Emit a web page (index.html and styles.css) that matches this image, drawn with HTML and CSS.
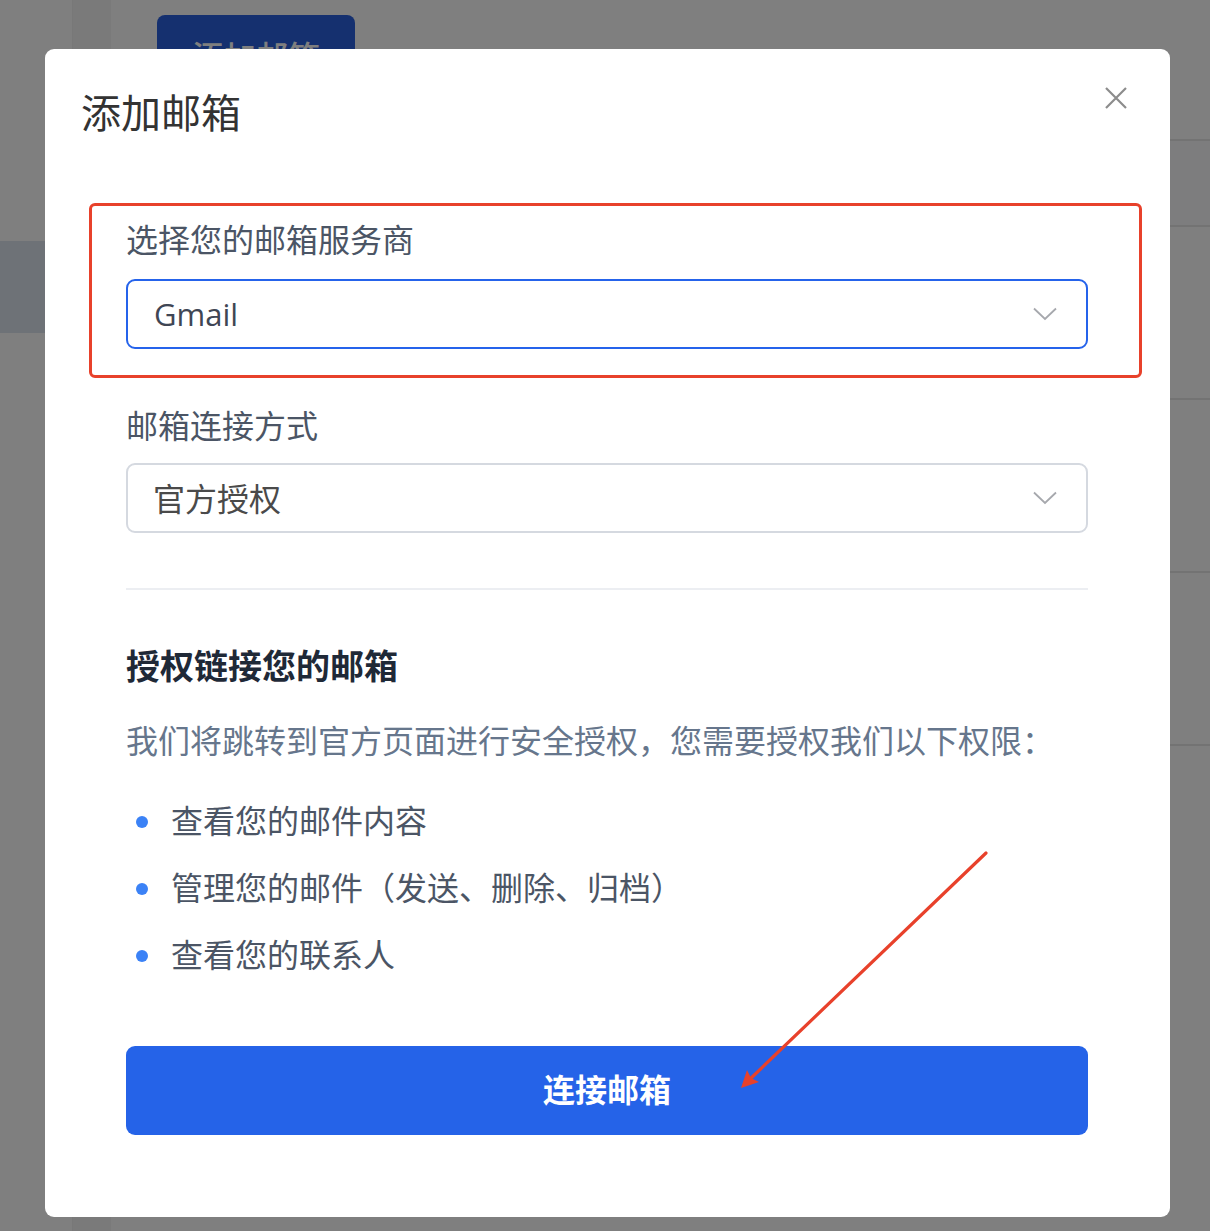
FILE: index.html
```html
<!DOCTYPE html>
<html lang="zh-CN">
<head>
<meta charset="utf-8">
<title>添加邮箱</title>
<link rel="stylesheet" href="styles.css">
</head>
<body>
<div class="app">
  <aside class="sidebar">
    <div class="nav-item"></div>
    <div class="nav-item"></div>
    <div class="nav-item active"></div>
  </aside>
  <div class="subnav"></div>
  <main class="main">
    <div class="toolbar">
      <button class="primary-btn">添加邮箱</button>
    </div>
    <div class="table">
      <div class="row head"></div>
      <div class="row"></div>
      <div class="row"></div>
      <div class="row"></div>
    </div>
  </main>
</div>

<div class="overlay">
  <div class="modal">
    <div class="modal-header">
      <h2 class="modal-title">添加邮箱</h2>
      <button class="close-btn" aria-label="关闭">
        <svg viewBox="0 0 24 24" width="24" height="24"><path d="M2 2 L22 22 M22 2 L2 22" stroke="#8c8c8c" stroke-width="2.2" fill="none" stroke-linecap="butt"/></svg>
      </button>
    </div>
    <div class="modal-body">
      <div class="field">
        <label class="field-label">选择您的邮箱服务商</label>
        <div class="select active">
          <span class="select-value latin">Gmail</span>
          <svg class="chevron" viewBox="0 0 24 14" width="24" height="14"><path d="M1 1.5 L12 12 L23 1.5" stroke="#a6a8ad" stroke-width="1.8" fill="none"/></svg>
        </div>
      </div>
      <div class="field field-second">
        <label class="field-label">邮箱连接方式</label>
        <div class="select">
          <span class="select-value">官方授权</span>
          <svg class="chevron" viewBox="0 0 24 14" width="24" height="14"><path d="M1 1.5 L12 12 L23 1.5" stroke="#a6a8ad" stroke-width="1.8" fill="none"/></svg>
        </div>
      </div>
      <hr class="divider">
      <h3 class="section-title">授权链接您的邮箱</h3>
      <p class="section-desc">我们将跳转到官方页面进行安全授权，您需要授权我们以下权限：</p>
      <ul class="perm-list">
        <li>查看您的邮件内容</li>
        <li>管理您的邮件（发送、删除、归档）</li>
        <li>查看您的联系人</li>
      </ul>
      <button class="connect-btn">连接邮箱</button>
    </div>
    <div class="annot-box"></div>
  </div>
  <svg class="annot-arrow" viewBox="0 0 1210 1231" width="1210" height="1231">
    <line x1="986" y1="853" x2="748" y2="1081" stroke="#e8412b" stroke-width="3.2" stroke-linecap="round"/>
    <path d="M741 1088 L747 1070 L751 1078 L759 1082 Z" fill="#e8412b"/>
  </svg>
</div>
</body>
</html>
```

FILE: styles.css
```css
* { box-sizing: border-box; }

html, body {
  margin: 0;
  padding: 0;
  width: 1210px;
  height: 1231px;
  overflow: hidden;
}

body {
  font-family: "Noto Sans CJK SC", "Noto Sans", sans-serif;
  background: #ffffff;
}

/* underlying page */
.app {
  display: flex;
  width: 1210px;
  height: 1231px;
}

.sidebar {
  width: 72px;
  background: #ffffff;
  display: flex;
  flex-direction: column;
  padding-top: 57px;
}

.nav-item {
  height: 92px;
}

.nav-item.active {
  background: #dde5ef;
}

.subnav {
  width: 39px;
  background: #f5f5f5;
  border-left: 1px solid #f0f0f0;
}

.main {
  flex: 1;
  background: #ffffff;
  display: flex;
  flex-direction: column;
}

.toolbar {
  height: 141px;
  padding: 15px 0 0 46px;
  border-bottom: 2px solid #e6e6e6;
}

.primary-btn {
  width: 198px;
  height: 80px;
  border: none;
  border-radius: 8px;
  background: #2a60de;
  color: #ffffff;
  font-family: "Noto Sans CJK SC", sans-serif;
  font-size: 32px;
  font-weight: 500;
}

.table {
  display: flex;
  flex-direction: column;
}

.row {
  height: 173px;
  border-bottom: 2px solid #e6e6e6;
}

.row.head {
  height: 86px;
  background: #fafafd;
}

/* overlay and modal */
.overlay {
  position: fixed;
  inset: 0;
  background: rgba(0, 0, 0, 0.5);
  padding: 49px 0 0 45px;
}

.modal {
  position: relative;
  width: 1125px;
  height: 1168px;
  background: #ffffff;
  border-radius: 9px;
}

.modal-header {
  display: flex;
  justify-content: space-between;
  align-items: flex-start;
  padding: 38px 42px 0 36px;
}

.modal-title {
  margin: 0;
  font-size: 40px;
  line-height: 48px;
  font-weight: 400;
  color: #333333;
}

.close-btn {
  margin-top: -1px;
  width: 24px;
  height: 24px;
  padding: 0;
  border: none;
  background: none;
  display: flex;
}

.modal-body {
  padding: 83px 82px 0 81px;
  display: flex;
  flex-direction: column;
}

.field {
  display: flex;
  flex-direction: column;
  gap: 21px;
}

.field.field-second {
  margin-top: 55px;
  gap: 19px;
}

.field-label {
  font-size: 32px;
  line-height: 40px;
  color: #4b5565;
}

.select {
  height: 70px;
  border: 2px solid #d5d9e0;
  border-radius: 9px;
  display: flex;
  align-items: center;
  justify-content: space-between;
  padding: 0 29px 0 25px;
}

.select.active {
  border-color: #2563eb;
}

.select-value {
  font-size: 32px;
  color: #4a4a4a;
  padding-bottom: 3px;
}

.select-value.latin {
  font-family: "Open Sans", sans-serif;
  font-size: 31px;
  color: #3f4654;
  padding-bottom: 1px;
  margin-left: 1px;
}

.chevron {
  display: block;
}

.divider {
  margin: 55px 0 0;
  border: none;
  height: 2px;
  background: #eceef2;
}

.section-title {
  margin: 53px 0 0;
  font-size: 34px;
  line-height: 44px;
  font-weight: 700;
  color: #1f2937;
}

.section-desc {
  margin: 30px 0 0;
  font-size: 32px;
  line-height: 44px;
  color: #66768c;
}

.perm-list {
  list-style: none;
  margin: 24px 0 0;
  padding: 0;
}

.perm-list li {
  display: flex;
  align-items: center;
  height: 67px;
  font-size: 32px;
  color: #4b5565;
}

.perm-list li::before {
  content: "";
  width: 12px;
  height: 12px;
  border-radius: 50%;
  background: #3b82f6;
  margin: 6px 23px 0 10px;
  flex: none;
}

.connect-btn {
  margin-top: 60px;
  height: 89px;
  border: none;
  border-radius: 9px;
  background: #2563e8;
  color: #ffffff;
  font-family: "Noto Sans CJK SC", sans-serif;
  font-size: 32px;
  font-weight: 700;
  padding: 0 0 5px;
}

/* annotation overlays */
.annot-box {
  position: absolute;
  left: 44px;
  top: 154px;
  width: 1053px;
  height: 175px;
  border: 3px solid #e8412b;
  border-radius: 6px;
  pointer-events: none;
}

.annot-arrow {
  position: absolute;
  left: 0;
  top: 0;
  pointer-events: none;
}
```
